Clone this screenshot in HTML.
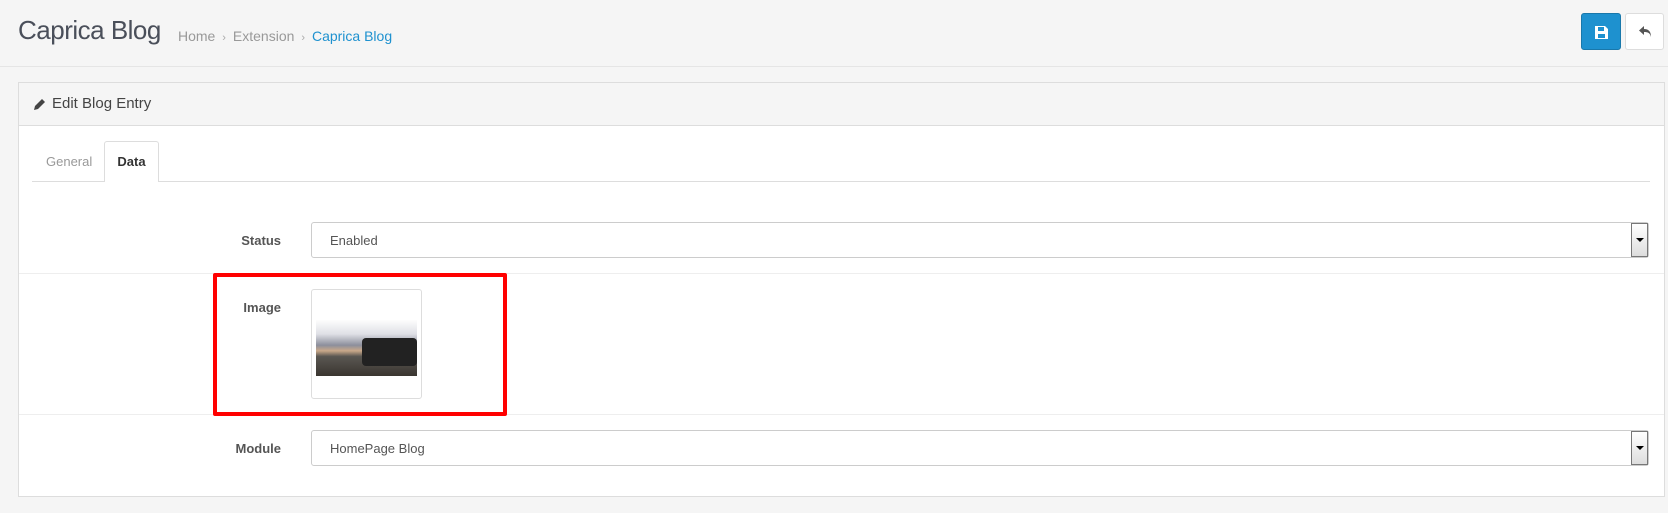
<!DOCTYPE html>
<html><head><style>
*{box-sizing:border-box;margin:0;padding:0}
body{width:1668px;height:513px;background:#f5f5f5;font-family:"Liberation Sans",sans-serif;position:relative;overflow:hidden;color:#555}
.a{position:absolute}
</style></head><body>
<div class="a" style="left:18px;top:15px;font-size:26px;color:#4a4f5a;letter-spacing:-0.5px">Caprica Blog</div>
<div class="a" style="left:178px;top:28px;font-size:14px;color:#999">Home <span style="font-size:11px;color:#aaa">&nbsp;›&nbsp;</span> Extension <span style="font-size:11px;color:#aaa">&nbsp;›&nbsp;</span> <span style="color:#1e91cf">Caprica Blog</span></div>
<div class="a" style="left:1581px;top:13px;width:40px;height:37px;background:#1e91cf;border:1px solid #1978ab;border-radius:3px"><svg class="a" style="left:13px;top:12px" width="13" height="13" viewBox="0 0 13 13"><path d="M0 0h10l3 3v10H0z" fill="#fff"/><rect x="3" y="1" width="6" height="4" fill="#1e91cf"/><rect x="3" y="8" width="7" height="4" fill="#1e91cf"/></svg></div>
<div class="a" style="left:1625px;top:13px;width:39px;height:37px;background:#fff;border:1px solid #ddd;border-radius:3px"><svg class="a" style="left:12px;top:11px" width="15" height="14" viewBox="0 0 15 14"><path d="M6 1L1 5.5 6 10V7c4 0 6 1 7 5 0-5-2-8-7-8z" fill="#555"/></svg></div>
<div class="a" style="left:0;top:66px;width:1668px;height:1px;background:#e5e5e5"></div>
<div class="a" style="left:18px;top:82px;width:1647px;height:415px;background:#fff;border:1px solid #ddd">
 <div style="height:43px;background:#f5f5f5;border-bottom:1px solid #ddd;position:relative">
  <svg class="a" style="left:14px;top:15px" width="13" height="13" viewBox="0 0 13 13"><path d="M1 12l1-4 7-7 3 3-7 7z" fill="#444"/></svg>
  <div class="a" style="left:33px;top:12px;font-size:15px;color:#444">Edit Blog Entry</div>
 </div>
 <div class="a" style="left:13px;top:98px;width:1618px;height:1px;background:#ddd"></div>
 <div class="a" style="left:27px;top:71px;font-size:13px;color:#999">General</div>
 <div class="a" style="left:85px;top:58px;width:55px;height:41px;background:#fff;border:1px solid #ddd;border-bottom:none;border-radius:3px 3px 0 0;font-size:13px;font-weight:bold;color:#333;text-align:center;line-height:40px">Data</div>
 <div class="a" style="left:0;top:190px;width:1645px;height:1px;background:#eee"></div>
 <div class="a" style="left:0;top:331px;width:1645px;height:1px;background:#eee"></div>
 <div class="a" style="left:200px;top:150px;width:62px;text-align:right;font-size:13px;font-weight:bold;color:#555">Status</div>
 <div class="a" style="left:200px;top:217px;width:62px;text-align:right;font-size:13px;font-weight:bold;color:#555">Image</div>
 <div class="a" style="left:200px;top:358px;width:62px;text-align:right;font-size:13px;font-weight:bold;color:#555">Module</div>
 <div class="a" style="left:292px;top:139px;width:1338px;height:36px;border:1px solid #ccc;border-radius:3px;font-size:13px;color:#555;padding:10px 0 0 18px">Enabled<div class="a" style="right:0;top:0;width:17px;height:34px;border:1px solid #777;background:linear-gradient(#fff,#ddd)"><div class="a" style="left:4px;top:14px;border:4px solid transparent;border-top:4px solid #000;border-bottom:none"></div></div></div>
 <div class="a" style="left:292px;top:347px;width:1338px;height:36px;border:1px solid #ccc;border-radius:3px;font-size:13px;color:#555;padding:10px 0 0 18px">HomePage Blog<div class="a" style="right:0;top:0;width:17px;height:34px;border:1px solid #777;background:linear-gradient(#fff,#ddd)"><div class="a" style="left:4px;top:14px;border:4px solid transparent;border-top:4px solid #000;border-bottom:none"></div></div></div>
 <div class="a" style="left:292px;top:206px;width:111px;height:110px;border:1px solid #ddd;border-radius:3px;background:#fff">
  <div class="a" style="left:4px;top:30px;width:101px;height:56px;background:linear-gradient(#fdfdfd 0%,#dfe0e6 25%,#8c8f9c 45%,#c9a889 55%,#5a5752 65%,#3a3530 100%)">
   <div class="a" style="left:46px;top:18px;width:55px;height:28px;background:#222;border-radius:4px"></div>
  </div>
 </div>
</div>
<div class="a" style="left:213px;top:273px;width:294px;height:143px;border:4px solid #f00;border-radius:2px"></div>
</body></html>
